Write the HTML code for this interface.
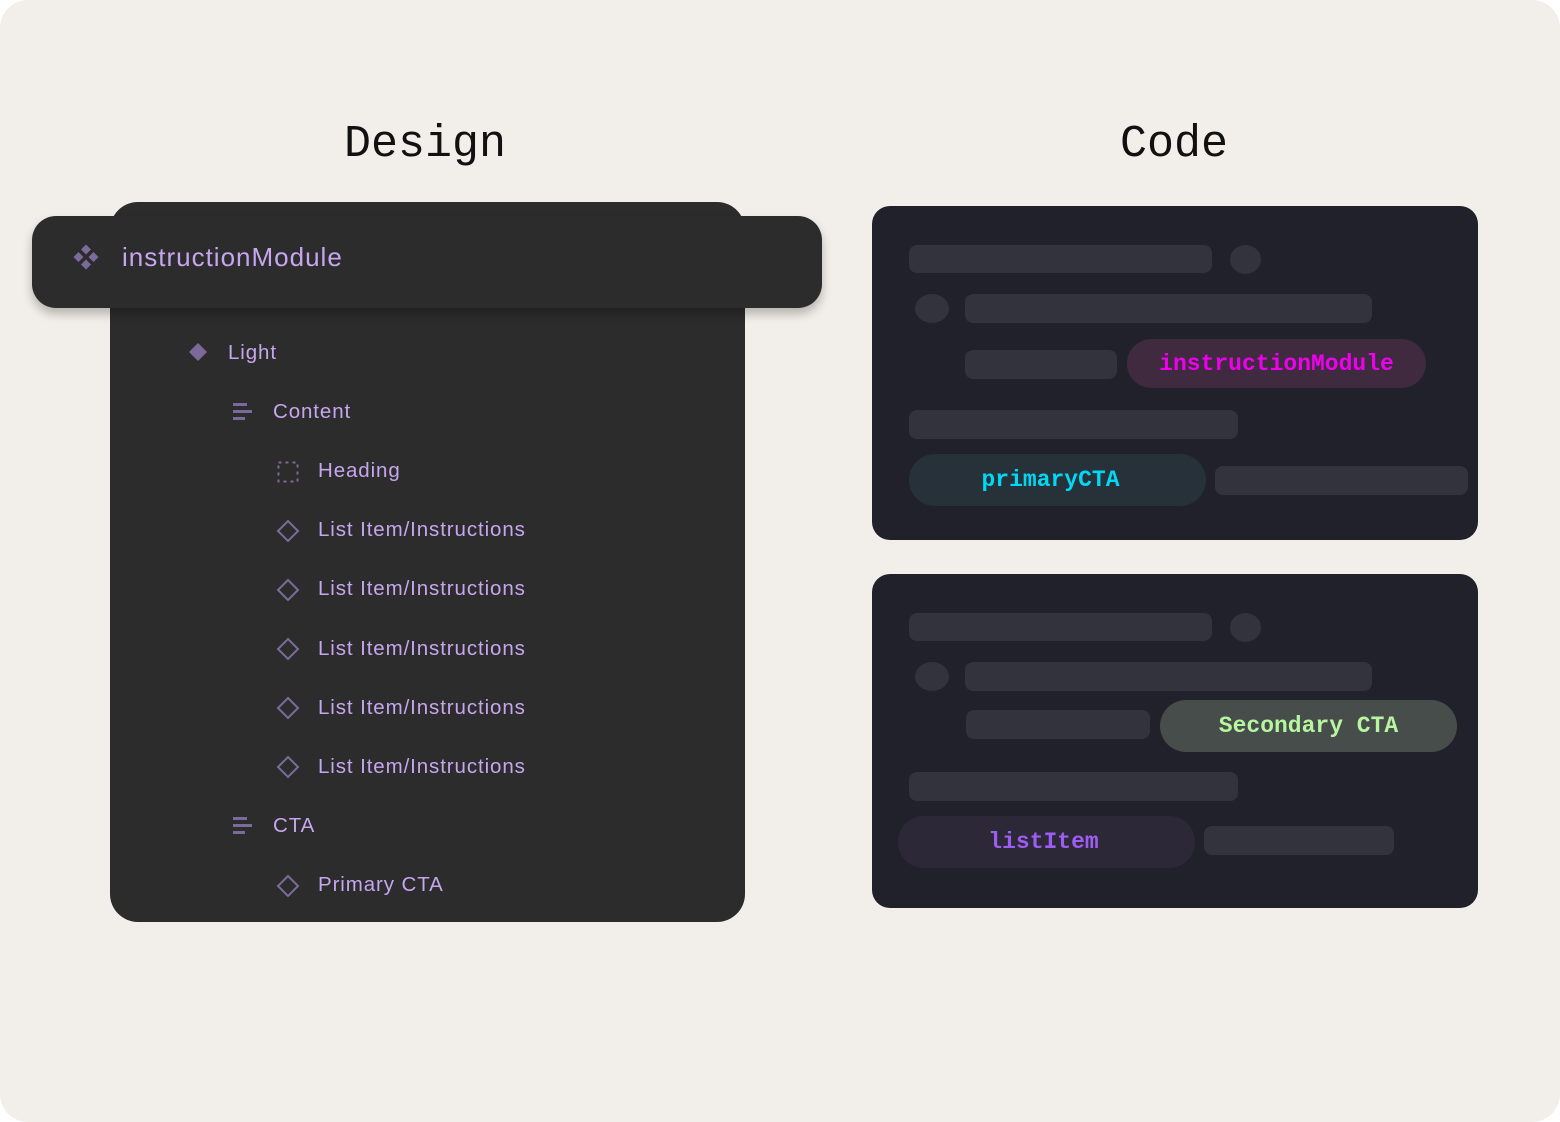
<!DOCTYPE html>
<html><head><style>
*{margin:0;padding:0;box-sizing:border-box}
body{width:1560px;height:1122px;background:#fff;position:relative;overflow:hidden;font-family:"Liberation Sans",sans-serif}
.bg{position:absolute;left:0;top:0;width:1560px;height:1122px;background:#f2efea;border-radius:28px}
.t{position:absolute;font-family:"Liberation Mono",monospace;font-size:45px;color:#111;transform:translateX(-50%);top:119px}
.a{position:absolute}
.panel{position:absolute;left:110px;top:202px;width:635px;height:720px;background:#2c2c2c;border-radius:28px}
.head{position:absolute;left:32px;top:216px;width:790px;height:92px;background:#2c2c2c;border-radius:24px;box-shadow:0 6px 10px rgba(0,0,0,.25)}
.lbl{position:absolute;color:#c6a6ee;font-size:20.5px;line-height:24px;letter-spacing:0.9px}
.code{position:absolute;left:872px;width:606px;height:334px;background:#21212b;border-radius:18px}
.bar{position:absolute;background:#33333d;border-radius:8px}
.cir{position:absolute;background:#33333d;border-radius:50%;width:30px;height:30px}
.pill{position:absolute;border-radius:26px;font-family:"Liberation Mono",monospace;font-weight:bold;font-size:23px;display:flex;align-items:center;justify-content:center}
</style></head><body>
<div class="bg"></div>
<div class="t" style="left:425px">Design</div>
<div class="t" style="left:1174px">Code</div>
<div class="panel"></div>
<div class="head"></div>
<svg class="a" style="left:72px;top:244px" width="28" height="26" viewBox="0 0 28 26" fill="#7b6a9a"><path d="M14 0.5l5 5-5 5-5-5z M6.5 8l5 5-5 5-5-5z M21.5 8l5 5-5 5-5-5z M14 15.5l5 5-5 5-5-5z"/></svg>
<div class="lbl" style="left:122px;top:243px;font-size:26px;line-height:28px;letter-spacing:1px">instructionModule</div>
<svg class="a" style="left:188px;top:342px" width="20" height="20"><path d="M10 1l9 9-9 9-9-9z" fill="#7b6a9a"/></svg>
<div class="lbl" style="left:228px;top:341px">Light</div>
<svg class="a" style="left:232px;top:402px" width="22" height="20" fill="#7b6a9a"><rect x="1" y="1" width="14" height="3"/><rect x="1" y="8" width="19" height="3"/><rect x="1" y="15" width="12" height="3"/></svg>
<div class="lbl" style="left:273px;top:400px">Content</div>
<svg class="a" style="left:277px;top:461px" width="22" height="22"><rect x="1.5" y="1.5" width="19" height="19" fill="none" stroke="#7b6a9a" stroke-width="2" stroke-dasharray="3 4"/></svg>
<div class="lbl" style="left:318px;top:459px">Heading</div>
<svg class="a" style="left:276px;top:519px" width="24" height="24"><path d="M12 2l10 10-10 10-10-10z" fill="none" stroke="#7b6a9a" stroke-width="2"/></svg>
<div class="lbl" style="left:318px;top:518px">List Item/Instructions</div>
<svg class="a" style="left:276px;top:578px" width="24" height="24"><path d="M12 2l10 10-10 10-10-10z" fill="none" stroke="#7b6a9a" stroke-width="2"/></svg>
<div class="lbl" style="left:318px;top:577px">List Item/Instructions</div>
<svg class="a" style="left:276px;top:637px" width="24" height="24"><path d="M12 2l10 10-10 10-10-10z" fill="none" stroke="#7b6a9a" stroke-width="2"/></svg>
<div class="lbl" style="left:318px;top:637px">List Item/Instructions</div>
<svg class="a" style="left:276px;top:696px" width="24" height="24"><path d="M12 2l10 10-10 10-10-10z" fill="none" stroke="#7b6a9a" stroke-width="2"/></svg>
<div class="lbl" style="left:318px;top:696px">List Item/Instructions</div>
<svg class="a" style="left:276px;top:755px" width="24" height="24"><path d="M12 2l10 10-10 10-10-10z" fill="none" stroke="#7b6a9a" stroke-width="2"/></svg>
<div class="lbl" style="left:318px;top:755px">List Item/Instructions</div>
<svg class="a" style="left:232px;top:816px" width="22" height="20" fill="#7b6a9a"><rect x="1" y="1" width="14" height="3"/><rect x="1" y="8" width="19" height="3"/><rect x="1" y="15" width="12" height="3"/></svg>
<div class="lbl" style="left:273px;top:814px">CTA</div>
<svg class="a" style="left:276px;top:874px" width="24" height="24"><path d="M12 2l10 10-10 10-10-10z" fill="none" stroke="#7b6a9a" stroke-width="2"/></svg>
<div class="lbl" style="left:318px;top:873px">Primary CTA</div>

<div class="code" style="top:206px"></div>
<div class="bar" style="left:909px;top:245px;width:303px;height:28px"></div>
<div class="cir" style="left:1230px;top:245px;width:31px;height:29px"></div>
<div class="cir" style="left:915px;top:294px;width:34px;height:29px"></div>
<div class="bar" style="left:965px;top:294px;width:407px;height:29px"></div>
<div class="bar" style="left:965px;top:350px;width:152px;height:29px"></div>
<div class="pill" style="left:1127px;top:339px;width:299px;height:49px;background:#3f2a3f;color:#ee00ee">instructionModule</div>
<div class="bar" style="left:909px;top:410px;width:329px;height:29px"></div>
<div class="pill" style="left:909px;top:454px;width:284px;height:52px;background:#26313a;color:#00d8f4;width:297px;padding-right:14px">primaryCTA</div>
<div class="bar" style="left:1215px;top:466px;width:253px;height:29px"></div>

<div class="code" style="top:574px"></div>
<div class="bar" style="left:909px;top:613px;width:303px;height:28px"></div>
<div class="cir" style="left:1230px;top:613px;width:31px;height:29px"></div>
<div class="cir" style="left:915px;top:662px;width:34px;height:29px"></div>
<div class="bar" style="left:965px;top:662px;width:407px;height:29px"></div>
<div class="bar" style="left:966px;top:710px;width:184px;height:29px"></div>
<div class="pill" style="left:1160px;top:700px;width:297px;height:52px;background:#464d4a;color:#b8f5a0">Secondary CTA</div>
<div class="bar" style="left:909px;top:772px;width:329px;height:29px"></div>
<div class="pill" style="left:898px;top:816px;width:297px;height:52px;background:#2d2838;color:#9d5cf2;padding-right:6px">listItem</div>
<div class="bar" style="left:1204px;top:826px;width:190px;height:29px"></div>
</body></html>
